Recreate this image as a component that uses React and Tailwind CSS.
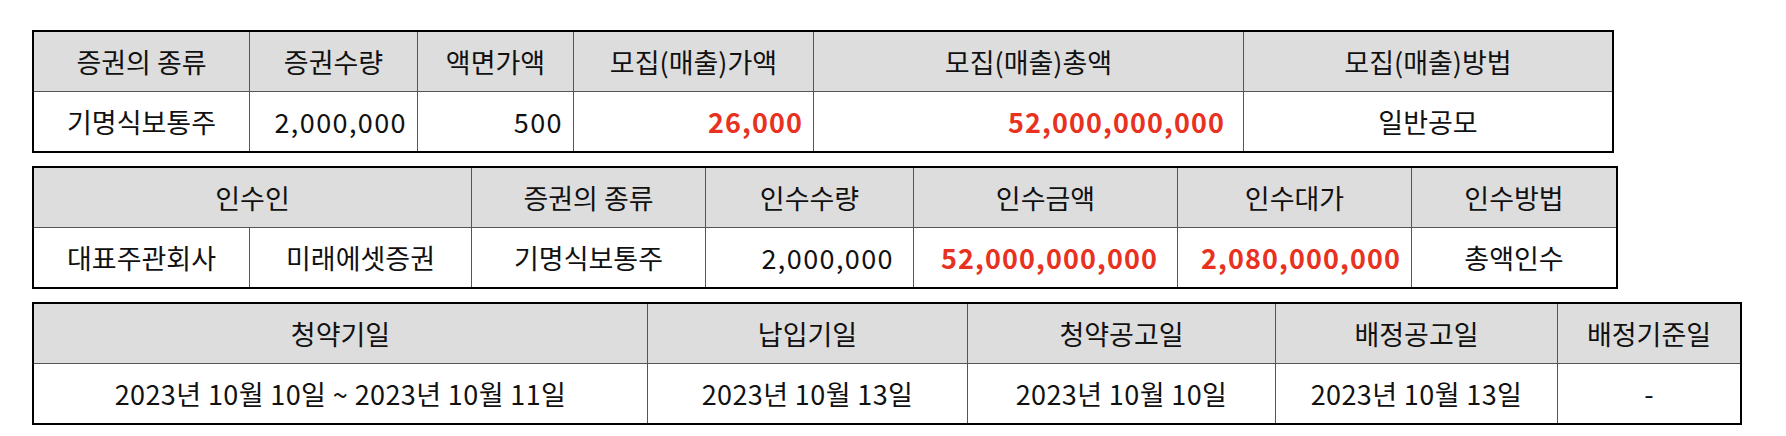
import React from "react";

const FONT = { fontFamily: '"Noto Sans CJK KR", "Noto Sans", sans-serif' };

function Cell({ children, className = "" }) {
  return (
    <div className={`flex items-center h-full whitespace-nowrap ${className}`}>
      {children}
    </div>
  );
}

export default function App() {
  const hdr = "bg-[#dddddd] h-[60px] border-b border-[#555555]";
  const body = "h-[59px]";
  const red = "text-[#e8321f] font-bold tracking-[1.1px]";
  const num = "tracking-[1.4px]";
  const date = "tracking-[0.4px]";
  return (
    <div className="bg-white w-[1786px] h-[436px] pt-[30px] pl-[32px] text-[#111111] text-[27px] leading-none" style={FONT}>
      {/* Table 1 */}
      <div className="w-[1582px] border-2 border-black">
        <div className={`grid grid-cols-[215px_168px_156px_240px_430px_369px] ${hdr}`}>
          <Cell className="justify-center">증권의 종류</Cell>
          <Cell className="justify-center border-l border-[#555555]">증권수량</Cell>
          <Cell className="justify-center border-l border-[#555555]">액면가액</Cell>
          <Cell className="justify-center border-l border-[#555555]">모집(매출)가액</Cell>
          <Cell className="justify-center border-l border-[#555555]">모집(매출)총액</Cell>
          <Cell className="justify-center border-l border-[#555555]">모집(매출)방법</Cell>
        </div>
        <div className={`grid grid-cols-[215px_168px_156px_240px_430px_369px] ${body}`}>
          <Cell className="justify-center">기명식보통주</Cell>
          <Cell className={`justify-end pr-[10px] border-l border-[#555555] ${num}`}>2,000,000</Cell>
          <Cell className={`justify-end pr-[10px] border-l border-[#555555] ${num}`}>500</Cell>
          <Cell className={`justify-end pr-[10px] border-l border-[#555555] ${red}`}>26,000</Cell>
          <Cell className={`justify-end pr-[18px] border-l border-[#555555] ${red}`}>52,000,000,000</Cell>
          <Cell className="justify-center border-l border-[#555555]">일반공모</Cell>
        </div>
      </div>

      {/* Table 2 */}
      <div className="mt-[13px] w-[1586px] border-2 border-black">
        <div className={`grid grid-cols-[437px_234px_208px_264px_234px_205px] ${hdr}`}>
          <Cell className="justify-center">인수인</Cell>
          <Cell className="justify-center border-l border-[#555555]">증권의 종류</Cell>
          <Cell className="justify-center border-l border-[#555555]">인수수량</Cell>
          <Cell className="justify-center border-l border-[#555555]">인수금액</Cell>
          <Cell className="justify-center border-l border-[#555555]">인수대가</Cell>
          <Cell className="justify-center border-l border-[#555555]">인수방법</Cell>
        </div>
        <div className={`grid grid-cols-[215px_222px_234px_208px_264px_234px_205px] ${body}`}>
          <Cell className="justify-center">대표주관회사</Cell>
          <Cell className="justify-center border-l border-[#555555]">미래에셋증권</Cell>
          <Cell className="justify-center border-l border-[#555555]">기명식보통주</Cell>
          <Cell className={`justify-end pr-[19px] border-l border-[#555555] ${num}`}>2,000,000</Cell>
          <Cell className={`justify-end pr-[19px] border-l border-[#555555] ${red}`}>52,000,000,000</Cell>
          <Cell className={`justify-end pr-[10px] border-l border-[#555555] ${red}`}>2,080,000,000</Cell>
          <Cell className="justify-center border-l border-[#555555]">총액인수</Cell>
        </div>
      </div>

      {/* Table 3 */}
      <div className="mt-[13px] w-[1710px] border-2 border-black">
        <div className={`grid grid-cols-[613px_320px_308px_282px_183px] ${hdr}`}>
          <Cell className="justify-center">청약기일</Cell>
          <Cell className="justify-center border-l border-[#555555]">납입기일</Cell>
          <Cell className="justify-center border-l border-[#555555]">청약공고일</Cell>
          <Cell className="justify-center border-l border-[#555555]">배정공고일</Cell>
          <Cell className="justify-center border-l border-[#555555]">배정기준일</Cell>
        </div>
        <div className={`grid grid-cols-[613px_320px_308px_282px_183px] ${body}`}>
          <Cell className={`justify-center ${date}`}>2023년 10월 10일 ~ 2023년 10월 11일</Cell>
          <Cell className={`justify-center border-l border-[#555555] ${date}`}>2023년 10월 13일</Cell>
          <Cell className={`justify-center border-l border-[#555555] ${date}`}>2023년 10월 10일</Cell>
          <Cell className={`justify-center border-l border-[#555555] ${date}`}>2023년 10월 13일</Cell>
          <Cell className="justify-center border-l border-[#555555]">-</Cell>
        </div>
      </div>
    </div>
  );
}
